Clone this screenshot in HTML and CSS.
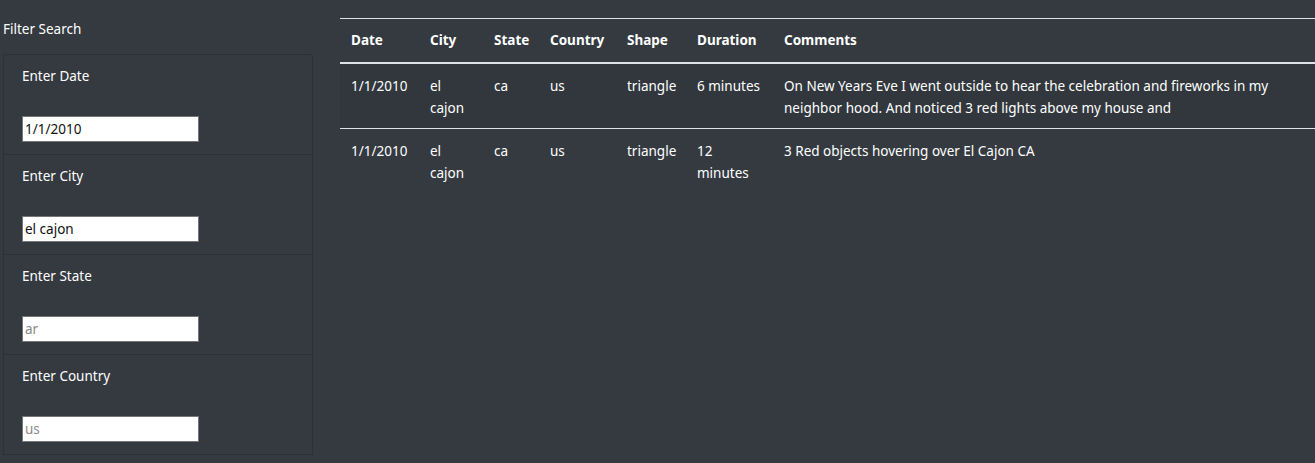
FILE: index.html
```html
<!DOCTYPE html>
<html>
<head>
<meta charset="utf-8">
<link rel="stylesheet" href="styles.css">
</head>
<body>
<div class="page">
  <aside class="filters">
    <div class="filters-title">Filter Search</div>
    <ul class="filter-list">
      <li class="filter-item">
        <label class="filter-label" for="date">Enter Date</label>
        <input class="filter-input" id="date" type="text" value="1/1/2010">
      </li>
      <li class="filter-item">
        <label class="filter-label" for="city">Enter City</label>
        <input class="filter-input" id="city" type="text" value="el cajon">
      </li>
      <li class="filter-item">
        <label class="filter-label" for="state">Enter State</label>
        <input class="filter-input" id="state" type="text" placeholder="ar">
      </li>
      <li class="filter-item">
        <label class="filter-label" for="country">Enter Country</label>
        <input class="filter-input" id="country" type="text" placeholder="us">
      </li>
    </ul>
  </aside>
  <main class="results">
    <table class="ufo-table">
      <colgroup>
        <col class="c-date"><col class="c-city"><col class="c-state"><col class="c-country"><col class="c-shape"><col class="c-duration"><col class="c-comments">
      </colgroup>
      <thead>
        <tr><th>Date</th><th>City</th><th>State</th><th>Country</th><th>Shape</th><th>Duration</th><th>Comments</th></tr>
      </thead>
      <tbody>
        <tr class="row-odd">
          <td>1/1/2010</td><td>el cajon</td><td>ca</td><td>us</td><td>triangle</td><td>6 minutes</td>
          <td>On New Years Eve I went outside to hear the celebration and fireworks in my neighbor hood. And noticed 3 red lights above my house and</td>
        </tr>
        <tr class="row-even">
          <td>1/1/2010</td><td>el cajon</td><td>ca</td><td>us</td><td>triangle</td><td>12 minutes</td>
          <td>3 Red objects hovering over El Cajon CA</td>
        </tr>
      </tbody>
    </table>
  </main>
</div>
</body>
</html>
```
FILE: styles.css
```css
html, body {
  margin: 0;
  padding: 0;
  background: #343a40;
  color: #ffffff;
  font-family: "Noto Sans", "Open Sans", sans-serif;
  font-size: 14px;
  height: 100%;
  overflow: hidden;
}

.page {
  display: grid;
  grid-template-columns: 310px 1fr;
  column-gap: 27px;
  padding-left: 3px;
}

.filters-title {
  font-family: "Noto Sans", sans-serif;
  font-size: 13.5px;
  line-height: 20px;
  padding-top: 19px;
  height: 35px;
}

.filter-list {
  list-style: none;
  margin: 0;
  padding: 0;
  border: 1px solid #2c3137;
  border-bottom: none;
  border-radius: 3px 3px 0 0;
}

.filter-item {
  padding: 11px 18px 12px;
  border-bottom: 1px solid #2c3137;
}

.filter-label {
  display: block;
  font-size: 13.5px;
  line-height: 21px;
  margin-bottom: 29px;
}

.filter-input {
  display: block;
  box-sizing: border-box;
  width: 177px;
  height: 26px;
  margin: 0;
  padding: 1px 2px;
  border: 1px solid #767676;
  border-radius: 0;
  background: #ffffff;
  color: #111;
  font-family: "Noto Sans", sans-serif;
  font-size: 13.5px;
}

.filter-input::placeholder {
  color: #8a8a8a;
}

.results {
  padding-top: 18px;
}

.ufo-table {
  width: 100%;
  border-collapse: collapse;
  table-layout: fixed;
}

.c-date { width: 79px; }
.c-city { width: 64px; }
.c-state { width: 56px; }
.c-country { width: 77px; }
.c-shape { width: 70px; }
.c-duration { width: 87px; }

.ufo-table th,
.ufo-table td {
  text-align: left;
  vertical-align: top;
  padding: 11px 11px 9px;
  line-height: 22px;
  font-size: 13.5px;
}

.ufo-table thead th {
  border-top: 1px solid #dee2e6;
  border-bottom: 2px solid #dee2e6;
  font-weight: 700;
  padding-top: 10px;
  padding-bottom: 10px;
  line-height: 23px;
}

.row-odd td {
  background: rgba(0, 0, 0, 0.04);
  border-bottom: 1px solid #dee2e6;
}
```
